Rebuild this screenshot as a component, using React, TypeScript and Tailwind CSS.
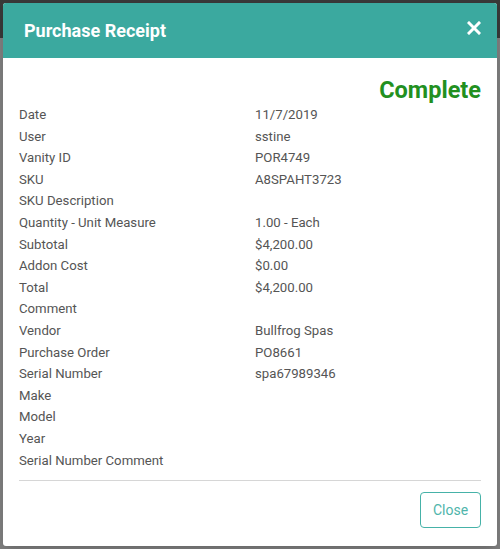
import React from "react";

const rows: [string, string][] = [
  ["Date", "11/7/2019"],
  ["User", "sstine"],
  ["Vanity ID", "POR4749"],
  ["SKU", "A8SPAHT3723"],
  ["SKU Description", ""],
  ["Quantity - Unit Measure", "1.00 - Each"],
  ["Subtotal", "$4,200.00"],
  ["Addon Cost", "$0.00"],
  ["Total", "$4,200.00"],
  ["Comment", ""],
  ["Vendor", "Bullfrog Spas"],
  ["Purchase Order", "PO8661"],
  ["Serial Number", "spa67989346"],
  ["Make", ""],
  ["Model", ""],
  ["Year", ""],
  ["Serial Number Comment", ""],
];

export default function App() {
  return (
    <div
      className="relative w-[500px] h-[549px] overflow-hidden"
      style={{ fontFamily: "Roboto, 'Liberation Sans', sans-serif" }}
    >
      <div className="flex flex-col h-full">
        <div className="h-[38px] bg-[#383838]" />
        <div className="flex-1 bg-[#7d7d7d]" />
      </div>
      <div className="absolute left-[3px] top-[3px] w-[494px] h-[543px] bg-white rounded-[3px] shadow-lg flex flex-col overflow-hidden">
        <div className="h-[55px] bg-[#3ba99f] flex items-center justify-between pl-[21px] pr-[16px] shrink-0">
          <h1 className="text-white font-bold text-[18px] leading-none">Purchase Receipt</h1>
          <svg width="14" height="14" viewBox="0 0 14 14" className="mb-[5px]">
            <path d="M2 2 L12 12 M12 2 L2 12" stroke="white" strokeWidth="3" strokeLinecap="square" />
          </svg>
        </div>
        <div className="flex-1 flex flex-col px-[16px] pt-[18px] pb-[18px]">
          <div className="text-right text-[#22901f] font-bold text-[23.5px] leading-[28px]">Complete</div>
          <div className="grid grid-cols-[236px_1fr] text-[13.2px] leading-[21.6px] text-[#555555]">
            {rows.map(([k, v]) => (
              <React.Fragment key={k}>
                <div>{k}</div>
                <div>{v || "\u00a0"}</div>
              </React.Fragment>
            ))}
          </div>
          <div className="border-t border-[#d6d6d6] mt-[9px]" />
          <div className="flex justify-end mt-[11px]">
            <button className="w-[61px] h-[36px] border border-[#46b2a8] rounded-[4px] text-[#4fb5ab] text-[14px]">
              Close
            </button>
          </div>
        </div>
      </div>
    </div>
  );
}
